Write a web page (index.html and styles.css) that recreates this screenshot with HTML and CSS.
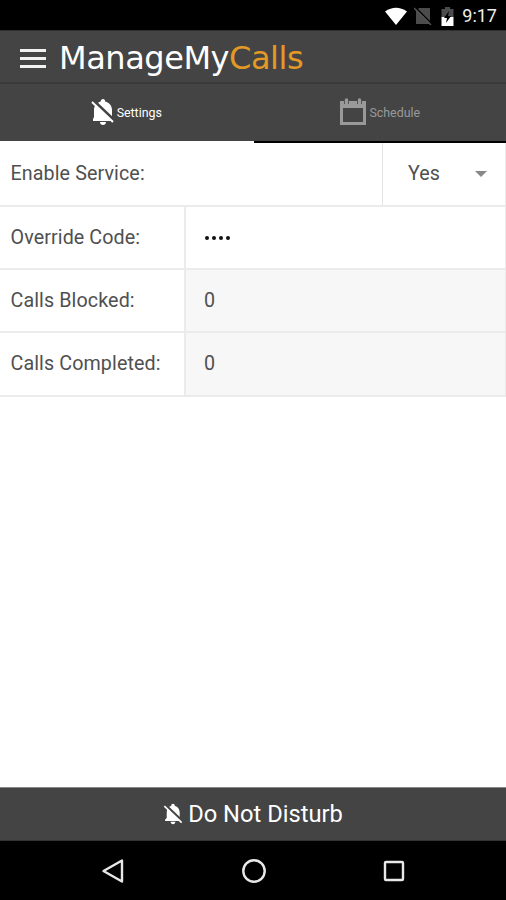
FILE: index.html
```html
<!DOCTYPE html>
<html lang="en">
<head>
  <meta charset="UTF-8">
  <title>ManageMyCalls</title>
  <link rel="stylesheet" href="styles.css">
</head>
<body>

  <div class="statusbar">
    <svg class="wifi" width="24" height="18" viewBox="0 0 24 18"><path d="M1 4.500Q12-3 23 4.500L12 18z" fill="#fff"/></svg>
    <svg class="nosim" width="18" height="18" viewBox="0 0 18 18">
      <path d="M2 3l2-1 1-1h11v16H2z" fill="#4c4c4c"/>
      <path d="M1 0l17 17" stroke="#000" stroke-width="1.500"/>
      <path d="M0 1l17 17" stroke="#555" stroke-width="1.500"/>
    </svg>
    <svg class="battery" width="13" height="19" viewBox="0 0 13 19">
      <path d="M4 0h5v2h3.500v8H.5V2H4z" fill="#4c4c4c"/>
      <path d="M.5 10h12v9H.5z" fill="#fff"/>
      <path d="M8 4l-5 7h3l-1 5 5-7H7z" fill="#000"/>
    </svg>
    <span class="clock">9:17</span>
  </div>

  <header>
    <div class="menu"><i></i><i></i><i></i></div>
    <h1>ManageMy<span>Calls</span></h1>
  </header>

  <nav class="tabs">
    <a class="tab active">
      <svg width="24" height="28" viewBox="0 0 24 28">
        <path d="M12 1c1.400 0 2.200 1 2.200 2.400 4 1 6.800 4.300 6.800 8.600v7l2 2v2H2v-2l1-2v-7c0-4.300 2.800-7.600 6.800-8.600C9.800 2 10.600 1 12 1zM9 24h6c0 1.700-1.300 3-3 3s-3-1.300-3-3z" fill="#fff"/>
        <path d="M2 2l22 21" stroke="#444" stroke-width="3"/>
        <path d="M1 4l21 20" stroke="#fff" stroke-width="2"/>
      </svg>
      <span>Settings</span>
    </a>
    <a class="tab">
      <svg width="28" height="28" viewBox="0 0 28 28">
        <path d="M1 3h26v24H1zM4 10v14h20V10z" fill="#999" fill-rule="evenodd"/>
        <path d="M7.500 1v5M20.500 1v5" stroke="#444" stroke-width="5"/>
        <path d="M7.500 2v4M20.500 2v4" stroke="#999" stroke-width="3.400" stroke-linecap="round"/>
      </svg>
      <span>Schedule</span>
    </a>
  </nav>

  <main>
    <div class="row service">
      <div class="label">Enable Service:</div>
      <div class="select">Yes <i class="arrow"></i></div>
    </div>
    <div class="row">
      <div class="label">Override Code:</div>
      <div class="value code"><i></i><i></i><i></i><i></i></div>
    </div>
    <div class="row">
      <div class="label">Calls Blocked:</div>
      <div class="value readonly">0</div>
    </div>
    <div class="row last">
      <div class="label">Calls Completed:</div>
      <div class="value readonly">0</div>
    </div>
  </main>

  <footer>
    <svg width="20" height="22" viewBox="0 0 24 28">
      <path d="M12 1c1.400 0 2.200 1 2.200 2.400 4 1 6.300 4.300 6.300 8.600v7l2.500 2v2H2v-2l2-2v-7c0-4.300 2-7.600 5.800-8.600C9.800 2 10.600 1 12 1zM9 24h6c0 1.700-1.300 3-3 3s-3-1.300-3-3z" fill="#fff"/>
      <path d="M2 2l22 21" stroke="#444" stroke-width="3"/>
      <path d="M1 4l22 21" stroke="#fff" stroke-width="2"/>
    </svg>
    <span>Do Not Disturb</span>
  </footer>

  <div class="navbar">
    <svg width="24" height="26" viewBox="0 0 24 26"><path d="M2.500 13L21 2.500v21z"/></svg>
    <svg width="26" height="26" viewBox="0 0 26 26"><circle cx="13" cy="13" r="10.700"/></svg>
    <svg width="24" height="26" viewBox="0 0 24 26"><rect x="3" y="4" width="18" height="18" rx="1"/></svg>
  </div>

</body>
</html>
```
FILE: styles.css
```css
* {
  box-sizing: border-box;
}
body {
  margin: 0;
  height: 900px;
  display: flex;
  flex-direction: column;
  overflow: hidden;
  background: #fff;
  color: #505050;
  font-family: Roboto, sans-serif;
}
svg {
  display: block;
  flex: none;
}
.statusbar {
  height: 30px;
  display: flex;
  align-items: center;
  justify-content: flex-end;
  padding: 2px 9px 0 0;
  background: #000;
  color: #fff;
}
.nosim {
  margin-left: 6px;
}
.battery {
  margin-left: 9px;
}
.clock {
  margin-left: 8px;
  font-size: 18px;
  font-weight: 400;
  line-height: 28px;
  color: #eee;
}
header {
  height: 54px;
  display: flex;
  align-items: center;
  padding-left: 20px;
  background: #444;
  border-top: 1px solid #303030;
  border-bottom: 2px solid #3a3a3a;
}
.menu {
  width: 26px;
  display: flex;
  flex-direction: column;
  gap: 5px;
  margin-top: 3px;
}
.menu i {
  height: 3px;
  background: #f2f2f2;
}
h1 {
  margin: 2px 0 0 13px;
  font: 400 32px/50px "DejaVu Sans", sans-serif;
  letter-spacing: -0.45px;
  color: #fff;
}
h1 span {
  color: #e39a25;
}
.tabs {
  height: 59px;
  display: flex;
  background: #444;
}
.tab {
  flex: 1;
  display: flex;
  align-items: center;
  justify-content: center;
  gap: 2px;
  padding-bottom: 1px;
  border-bottom: 2px solid #000;
  font-size: 12.4px;
  color: #999;
}
.tab.active {
  padding-right: 1px;
  border-color: #fff;
  color: #fff;
}
main {
  flex: 1;
}
.row {
  height: 63px;
  display: flex;
  border-right: 1px solid #ebebeb;
  border-bottom: 2px solid #ebebeb;
  font-size: 19.7px;
  line-height: 61px;
  letter-spacing: 0.1px;
}
.service {
  height: 64px;
  line-height: 62px;
}
.last {
  height: 64px;
  line-height: 62px;
}
.label {
  width: 184px;
  padding-left: 10.5px;
}
.service .label {
  flex: 1;
}
.select {
  width: 123px;
  display: flex;
  align-items: center;
  justify-content: space-between;
  padding: 0 18px 0 25px;
  border-left: 1px solid #e4e4e4;
}
.arrow {
  border: 6px solid transparent;
  border-top-color: #888;
  border-bottom: 0;
}
.value {
  flex: 1;
  padding-left: 18px;
  border-left: 2px solid #ebebeb;
}
.readonly {
  background: #f7f7f7;
}
.code {
  display: flex;
  align-items: center;
  gap: 3px;
  padding-left: 19px;
}
.code i {
  width: 4px;
  height: 4px;
  border-radius: 50%;
  background: #111;
}
footer {
  height: 54px;
  display: flex;
  align-items: center;
  justify-content: center;
  gap: 5px;
  background: #444;
  border-top: 1px solid #888;
  border-bottom: 1px solid #333;
  font-size: 23.7px;
  color: #fff;
}
.navbar {
  height: 59px;
  display: flex;
  align-items: center;
  justify-content: space-between;
  padding: 0 100px 0 101px;
  background: #000;
}
.navbar svg {
  fill: none;
  stroke: #e8e8e8;
  stroke-width: 2.4;
  stroke-linejoin: round;
}
```
